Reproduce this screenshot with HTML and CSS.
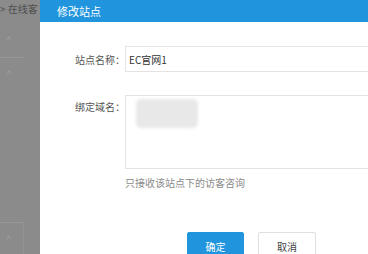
FILE: index.html
```html
<!DOCTYPE html>
<html lang="zh">
<head>
<meta charset="utf-8">
<link rel="stylesheet" href="styles.css">
</head>
<body>
<div class="page">
  <aside class="backdrop">
    <div class="crumb">&gt; 在线客</div>
    <div class="bg-row first"><span class="chev">^</span></div>
    <div class="bg-row"><span class="chev">^</span></div>
    <div class="bg-spacer"></div>
    <div class="bg-row bottom"><span class="chev">^</span></div>
  </aside>
  <section class="modal">
    <header class="modal-head">修改站点</header>
    <div class="modal-body">
      <div class="field">
        <label class="label">站点名称：</label>
        <input class="input" type="text" value="EC官网1">
      </div>
      <div class="field area-field">
        <label class="label">绑定域名：</label>
        <div class="area-wrap">
          <div class="textarea"><span class="blur"></span></div>
          <p class="hint">只接收该站点下的访客咨询</p>
        </div>
      </div>
      <div class="actions">
        <button class="btn primary">确定</button>
        <button class="btn">取消</button>
      </div>
    </div>
  </section>
</div>
</body>
</html>
```
FILE: styles.css
```css
html, body {
  margin: 0;
  padding: 0;
  width: 368px;
  height: 254px;
  overflow: hidden;
  font-family: "Microsoft YaHei", "Noto Sans CJK SC", "Liberation Sans", sans-serif;
}
.page {
  display: flex;
  width: 368px;
  height: 254px;
  overflow: hidden;
}
.backdrop {
  width: 40px;
  flex: none;
  background: #8b8b8b;
  display: flex;
  flex-direction: column;
  overflow: hidden;
}
.crumb {
  height: 23px;
  line-height: 17px;
  font-size: 10px;
  color: #4e4e4e;
  white-space: nowrap;
}
.bg-row {
  height: 31px;
  width: 24px;
  display: flex;
  align-items: center;
  padding-left: 6px;
  box-sizing: border-box;
}
.bg-row.first {
  height: 35px;
  border-bottom: 1px solid #979797;
}
.bg-row.bottom {
  border-top: 1px solid #979797;
  border-right: 1px solid #939393;
  height: 32px;
}
.bg-spacer {
  flex: 1;
}
.chev {
  color: #a0a0a0;
  font-size: 10px;
  line-height: 1;
}
.modal {
  width: 420px;
  flex: none;
  background: #fff;
  display: flex;
  flex-direction: column;
}
.modal-head {
  height: 23px;
  background: #2095dd;
  color: #fff;
  font-size: 11px;
  line-height: 22px;
  padding-left: 17px;
}
.modal-body {
  padding-top: 24px;
  display: flex;
  flex-direction: column;
}
.field {
  display: flex;
  align-items: center;
}
.area-field {
  align-items: flex-start;
  margin-top: 23px;
}
.label {
  flex: none;
  width: 85px;
  text-align: right;
  box-sizing: border-box;
  font-size: 10px;
  color: #555;
  white-space: nowrap;
}
.area-field .label {
  line-height: 24px;
}
.input {
  flex: none;
  width: 280px;
  height: 26px;
  box-sizing: border-box;
  border: 1px solid #e3e3e3;
  padding: 0 3px;
  font-family: inherit;
  font-size: 10px;
  color: #333;
  outline: none;
  margin: 0;
}
.area-wrap {
  flex: none;
  display: flex;
  flex-direction: column;
}
.textarea {
  width: 280px;
  height: 74px;
  box-sizing: border-box;
  border: 1px solid #e3e3e3;
  padding: 3px 10px;
}
.blur {
  display: block;
  width: 62px;
  height: 29px;
  background: #e8e8e8;
  border-radius: 5px;
  filter: blur(1.5px);
}
.hint {
  margin: 7px 0 0;
  font-size: 10px;
  color: #8a8a8a;
  line-height: 14px;
}
.actions {
  margin-top: 42px;
  padding-left: 147px;
  display: flex;
  gap: 14px;
}
.btn {
  width: 58px;
  height: 28px;
  border: 1px solid #e0e0e0;
  background: #fff;
  font-family: inherit;
  font-size: 10px;
  color: #444;
  border-radius: 2px;
  padding: 0;
}
.btn.primary {
  width: 57px;
  background: #2095dd;
  border-color: #2095dd;
  color: #fff;
}
```
